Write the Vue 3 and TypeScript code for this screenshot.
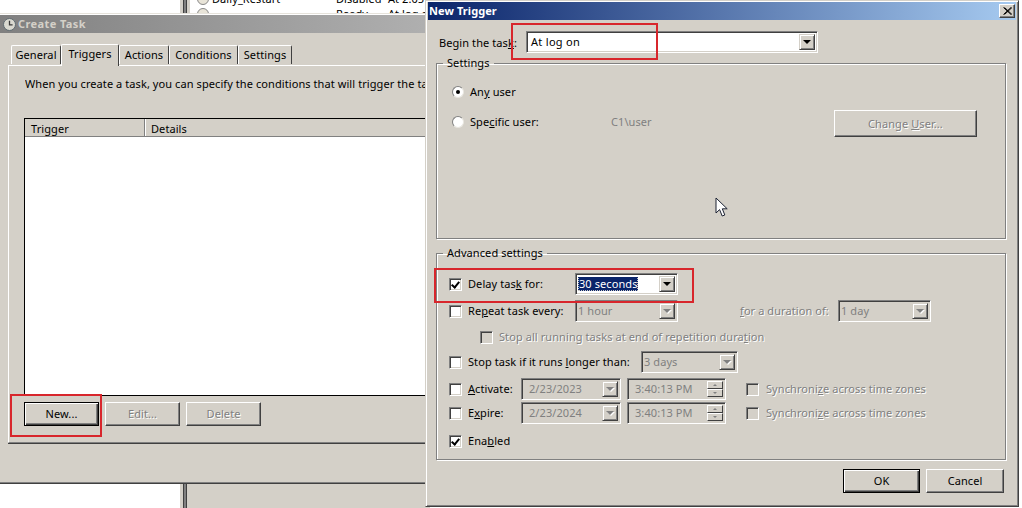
<script setup lang="ts">
const tabs: { label: string; active?: boolean }[] = [
  { label: 'General' },
  { label: 'Triggers', active: true },
  { label: 'Actions' },
  { label: 'Conditions' },
  { label: 'Settings' }
]
</script>

<template>
  <div class="desk">
    <div class="back-top">
      <div class="white-pane"></div>
      <div class="splitter"></div>
      <div class="task-list">
        <div class="task-row first">
          <span class="task-icon"></span><span class="t-name">Daily_Restart</span><span class="t-status">Disabled</span><span class="t-trig">At 2:05 AM</span>
        </div>
        <div class="task-row">
          <span class="task-icon"></span><span class="t-name"></span><span class="t-status">Ready</span><span class="t-trig">At log on</span>
        </div>
      </div>
    </div>
    <div class="back-bottom">
      <div class="white-pane"></div>
      <div class="splitter"></div>
      <div class="grey-pane"></div>
    </div>

    <section class="win create">
      <header class="title grey">
        <svg class="clock" width="13" height="13" viewBox="0 0 13 13">
          <circle cx="6.5" cy="6.5" r="6" fill="#d9d9d0" stroke="#5f6b70" />
          <path d="M6.5 2.8V6.8H9.6" fill="none" stroke="#3a3a3a" stroke-width="1.3" />
        </svg>
        <span>Create Task</span>
      </header>
      <nav class="tabs">
        <div v-for="t in tabs" :key="t.label" class="tab" :class="[t.label.toLowerCase(), { active: t.active }]">{{ t.label }}</div>
      </nav>
      <div class="panel">
        <p class="intro">When you create a task, you can specify the conditions that will trigger the task.</p>
        <div class="list">
          <div class="list-head">
            <div class="col c1">Trigger</div>
            <div class="col c2">Details</div>
          </div>
        </div>
        <div class="panel-buttons">
          <button class="btn def w75">New...</button>
          <button class="btn off w75">Edit...</button>
          <button class="btn off w75">Delete</button>
        </div>
      </div>
    </section>

    <section class="win trigger">
      <header class="title blue">
        <span>New Trigger</span>
        <span class="close">
          <svg width="9" height="8" viewBox="0 0 9 8"><path d="M0.5 0.5L8 7.5M1.5 0.5L9 7.5M8 0.5L0.5 7.5M9 0.5L1.5 7.5" stroke="#000" stroke-width="1" fill="none" /></svg>
        </span>
      </header>

      <div class="begin">
        <label class="begin-l">Begin the tas<u>k</u>:</label>
        <div class="combo begin-c"><span class="val">At log on</span><span class="arrow"><i></i></span></div>
      </div>

      <fieldset class="group g-settings">
        <legend>Settings</legend>
        <div class="row r-any">
          <span class="radio on"></span><span>An<u>y</u> user</span>
        </div>
        <div class="row r-spec">
          <span class="radio"></span><span class="spec-l">Spe<u>c</u>ific user:</span>
          <span class="user">C1\user</span>
          <button class="btn off change">Change <u>U</u>ser...</button>
        </div>
      </fieldset>

      <fieldset class="group g-adv">
        <legend>Advanced settings</legend>
        <div class="row r1">
          <span class="chk on"></span><span class="l-main">Delay tas<u>k</u> for:</span>
          <div class="combo w103"><span class="val"><b class="sel">30 seconds</b></span><span class="arrow"><i></i></span></div>
        </div>
        <div class="row r2">
          <span class="chk"></span><span class="l-main">Re<u>p</u>eat task every:</span>
          <div class="combo w103 dis"><span class="val">1 hour</span><span class="arrow"><i></i></span></div>
          <span class="l-dur dim"><u>f</u>or a duration of:</span>
          <div class="combo w93 dis"><span class="val">1 day</span><span class="arrow"><i></i></span></div>
        </div>
        <div class="row r3">
          <span class="chk dis-c"></span><span class="dim">Stop all running tasks at end of repetition dura<u>t</u>ion</span>
        </div>
        <div class="row r4">
          <span class="chk"></span><span class="l-stop">Stop task if it runs <u>l</u>onger than:</span>
          <div class="combo w97 dis"><span class="val">3 days</span><span class="arrow"><i></i></span></div>
        </div>
        <div class="row r5">
          <span class="chk"></span><span class="l-date"><u>A</u>ctivate:</span>
          <div class="combo w100 dis"><span class="val pad">2/23/2023</span><span class="arrow"><i></i></span></div>
          <div class="combo w99 dis tm"><span class="val pad">3:40:13 PM</span><span class="spin"><i class="up"></i><i class="dn"></i></span></div>
          <span class="chk dis-c sy"></span><span class="dim">Synchroni<u>z</u>e across time zones</span>
        </div>
        <div class="row r6">
          <span class="chk"></span><span class="l-date">E<u>x</u>pire:</span>
          <div class="combo w100 dis"><span class="val pad">2/23/2024</span><span class="arrow"><i></i></span></div>
          <div class="combo w99 dis tm"><span class="val pad">3:40:13 PM</span><span class="spin"><i class="up"></i><i class="dn"></i></span></div>
          <span class="chk dis-c sy"></span><span class="dim">Synchroni<u>z</u>e across time zones</span>
        </div>
        <div class="row r7">
          <span class="chk on"></span><span>Ena<u>b</u>led</span>
        </div>
      </fieldset>

      <footer class="foot">
        <button class="btn def ok">OK</button>
        <button class="btn cancel">Cancel</button>
      </footer>
    </section>

    <div class="mark m1"></div>
    <div class="mark m2"></div>
    <div class="mark m3"></div>

    <svg class="cursor" width="14" height="21" viewBox="0 0 14 21">
      <path d="M1 1V16L4.6 12.6L7.2 19L9.8 18L7.3 11.8H12.2Z" fill="#fff" stroke="#1c2233" stroke-width="1" />
    </svg>
  </div>
</template>

<style>
html, body { margin: 0; background: #fff; }
</style>

<style scoped>
.desk {
  position: relative;
  width: 1022px;
  height: 508px;
  overflow: hidden;
  background: #fff;
  font: 11px/14px "Noto Sans", sans-serif;
  letter-spacing: .08px;
  color: #000;
}
u { text-decoration: underline; text-underline-offset: 1px; }

.back-top, .back-bottom { position: absolute; left: 0; width: 430px; display: flex; }
.back-top { top: 0; height: 14px; overflow: hidden; }
.back-bottom { top: 484px; height: 24px; }
.white-pane { width: 180px; background: #fff; flex: none; }
.splitter { width: 10px; flex: none; background: linear-gradient(90deg, #d4d0c8 0 3px, #404040 3px 4px, #808080 4px 6px, #404040 6px 7px, #d4d0c8 7px); }
.grey-pane { flex: 1; background: #d4d0c8; }
.task-list { flex: 1; background: #fff; padding-left: 7px; margin-top: -9px; }
.task-row { display: flex; align-items: center; height: 15px; white-space: nowrap; }
.task-icon { width: 12px; height: 12px; border: 1px solid #888; border-radius: 50%; background: #e8e4d8; box-sizing: border-box; flex: none; }
.t-name { width: 124px; margin-left: 3px; flex: none; }
.t-status { width: 52px; flex: none; }
.t-trig { flex: none; }

.win {
  position: absolute;
  box-sizing: border-box;
  background: #d4d0c8;
  display: flex;
  flex-direction: column;
}
.create { left: 0; top: 13px; width: 432px; height: 471px; border-top: 1px solid #e6e3dc; border-bottom: 1px solid #404040; box-shadow: inset 0 1px 0 #fff, inset 0 -1px 0 #808080; }
.trigger { left: 425px; top: 0; width: 594px; height: 507px; border: 1px solid; border-color: #d4d0c8 #404040 #404040 #d4d0c8; box-shadow: inset 1px 1px 0 #fff, inset -1px -1px 0 #808080; padding: 1px 2px 0 2px; }

.title { height: 18px; flex: none; display: flex; align-items: center; font-weight: 700; font-size: 11px; }
.grey { margin-top: 1px; padding-left: 3px; color: #d4d0c8; background: linear-gradient(90deg, #808080, #b0b0b0); letter-spacing: .4px; }
.clock { margin-right: 2px; }
.blue { padding-left: 1px; color: #fff; background: linear-gradient(90deg, #0a246a, #a6caf0); justify-content: space-between; }
.close { width: 16px; height: 14px; margin-right: 1px; box-sizing: border-box; background: #d4d0c8; border: 1px solid; border-color: #fff #404040 #404040 #fff; display: flex; align-items: center; justify-content: center; box-shadow: inset -1px -1px 0 #808080; }

.tabs { display: flex; height: 22px; margin-top: 10px; padding-left: 11px; align-items: flex-end; flex: none; position: relative; z-index: 1; }
.tab { box-sizing: border-box; height: 19px; padding: 2px 0 0; text-align: center; border: 1px solid #fff; border-bottom: 0; border-right: 1px solid #404040; border-radius: 2px 2px 0 0; background: #d4d0c8; margin-bottom: 1px; }
.tab.active { height: 22px; margin-bottom: -1px; margin-top: 0; padding-top: 2px; }
.general { width: 50px; }
.triggers { width: 58px; }
.actions { width: 50px; }
.conditions { width: 69px; }
.settings { width: 54px; }

.panel { margin-left: 8px; margin-top: 0; height: 378px; box-sizing: border-box; border-top: 1px solid #fff; border-left: 1px solid #fff; border-bottom: 1px solid #808080; box-shadow: 0 1px 0 #404040; padding-left: 15px; display: flex; flex-direction: column; flex: none; }
.intro { margin: 11px 0 0 1px; white-space: nowrap; height: 14px; overflow: hidden; }
.list { margin-top: 27px; height: 278px; box-sizing: border-box; background: #fff; border: 1px solid #000; border-right: 0; border-bottom: 1px solid #000; flex: none; }
.list-head { display: flex; height: 18px; background: #d4d0c8; border-bottom: 1px solid #808080; box-sizing: border-box; }
.col { box-sizing: border-box; padding: 3px 0 0 6px; }
.c1 { width: 120px; border-right: 1px solid #808080; box-shadow: 1px 0 0 #fff; }
.c2 { flex: 1; }
.panel-buttons { display: flex; gap: 6px; margin-top: 6px; }

.btn { font: inherit; letter-spacing: inherit; padding: 0; box-sizing: border-box; background: #d4d0c8; color: #000; border: 1px solid; border-color: #fff #404040 #404040 #fff; box-shadow: inset -1px -1px 0 #808080; }
.w75 { width: 75px; height: 24px; }
.btn.def { border: 1px solid #000; box-shadow: inset 1px 1px 0 #fff, inset -1px -1px 0 #404040, inset -2px -2px 0 #808080; }
.btn.off { color: #808080; text-shadow: 1px 1px 0 #fff; }
.dim { color: #808080; text-shadow: 1px 1px 0 #fff; }

.begin { display: flex; align-items: center; margin: 10px 0 0 11px; height: 23px; flex: none; }
.begin-l { width: 87px; padding-top: 2px; }
.begin-c { width: 292px; height: 23px; letter-spacing: .3px; }
.begin-c .val { padding-left: 2px; }

.combo { box-sizing: border-box; display: flex; align-items: center; background: #fff; border: 1px solid; border-color: #808080 #fff #fff #808080; box-shadow: inset 1px 1px 0 #404040, inset -1px -1px 0 #d4d0c8; padding: 2px; height: 22px; flex: none; }
.combo.dis { background: #d4d0c8; color: #808080; }
.val { flex: 1; padding-left: 0; white-space: nowrap; overflow: hidden; }
.val.pad { padding-left: 5px; }
.sel { font-weight: 400; background: #0a246a; color: #fff; outline: 1px dotted #c8c8c8; outline-offset: -1px; padding: 0 1px; }
.arrow { width: 16px; height: 100%; box-sizing: border-box; background: #d4d0c8; border: 1px solid; border-color: #d4d0c8 #404040 #404040 #d4d0c8; box-shadow: inset 1px 1px 0 #fff, inset -1px -1px 0 #808080; display: flex; align-items: center; justify-content: center; flex: none; }
.arrow i { width: 0; height: 0; border: 4px solid transparent; border-top-color: #000; border-bottom: 0; }
.dis .arrow i { border-top-color: #808080; filter: drop-shadow(1px 1px 0 #fff); }
.spin { width: 16px; height: 100%; display: flex; flex-direction: column; flex: none; }
.spin i { flex: 1; box-sizing: border-box; background: #d4d0c8; border: 1px solid; border-color: #fff #404040 #404040 #fff; display: flex; align-items: center; justify-content: center; }
.spin i::after { content: ""; width: 0; height: 0; border: 2px solid transparent; }
.spin .up::after { border-bottom-color: #808080; border-top: 0; }
.spin .dn::after { border-top-color: #808080; border-bottom: 0; }

.group { box-sizing: border-box; width: 570px; margin: 0 0 0 8px; padding: 0 0 0 12px; border: 1px solid #808080; box-shadow: 1px 1px 0 #fff, inset 1px 1px 0 #fff; min-width: 0; flex: none; }
.group legend { height: 14px; line-height: 14px; padding: 0 4px; margin-left: -6px; }
.g-settings { height: 183px; margin-top: 3px; }
.g-adv { height: 214px; margin-top: 7px; }

.row { display: flex; align-items: center; height: 22px; white-space: nowrap; }
.radio { box-sizing: border-box; width: 12px; height: 12px; border-radius: 50%; background: #fff; border: 1px solid; border-color: #808080 #e8e6e0 #e8e6e0 #808080; margin: 0 6px 0 3px; flex: none; display: flex; align-items: center; justify-content: center; }
.radio.on::after { content: ""; width: 4px; height: 4px; border-radius: 50%; background: #000; }
.r-any { margin-top: 11px; }
.r-spec { margin-top: 7px; height: 24px; }
.spec-l { width: 141px; }
.user { width: 223px; color: #808080; }
.change { width: 143px; height: 27px; align-self: flex-start; }

.chk { box-sizing: border-box; width: 13px; height: 13px; background: #fff; border: 1px solid; border-color: #808080 #fff #fff #808080; box-shadow: inset 1px 1px 0 #404040, inset -1px -1px 0 #d4d0c8; margin-right: 6px; flex: none; position: relative; }
.chk.on::after { content: ""; position: absolute; left: 3px; top: 1px; width: 3px; height: 6px; border: solid #000; border-width: 0 2px 2px 0; transform: rotate(40deg); }
.chk.dis-c { background: #d4d0c8; }
.l-main { width: 107px; }
.w103 { width: 103px; }
.w93 { width: 93px; }
.w97 { width: 97px; }
.w100 { width: 100px; }
.w99 { width: 99px; margin-left: 6px; }
.l-dur { margin-left: 62px; width: 98px; }
.l-stop { width: 173px; }
.l-date { width: 53px; }
.sy { margin-left: 20px; margin-right: 7px; }
.r1 { margin-top: 13px; }
.r2 { margin-top: 5px; }
.r3 { margin-top: 4px; padding-left: 31px; }
.r4 { margin-top: 3px; }
.r5 { margin-top: 5px; }
.r6 { margin-top: 2px; }
.r7 { margin-top: 6px; }

.foot { display: flex; justify-content: flex-end; gap: 6px; margin: 9px 12px 0 0; flex: none; }
.ok { height: 24px; width: 77px; }
.cancel { height: 24px; width: 78px; }

.mark { position: absolute; box-sizing: border-box; border: 2px solid #d8262c; }
.m1 { left: 511px; top: 23px; width: 147px; height: 37px; }
.m2 { left: 434px; top: 268px; width: 260px; height: 35px; }
.m3 { left: 10px; top: 394px; width: 92px; height: 43px; }
.cursor { position: absolute; left: 715px; top: 197px; }
</style>
